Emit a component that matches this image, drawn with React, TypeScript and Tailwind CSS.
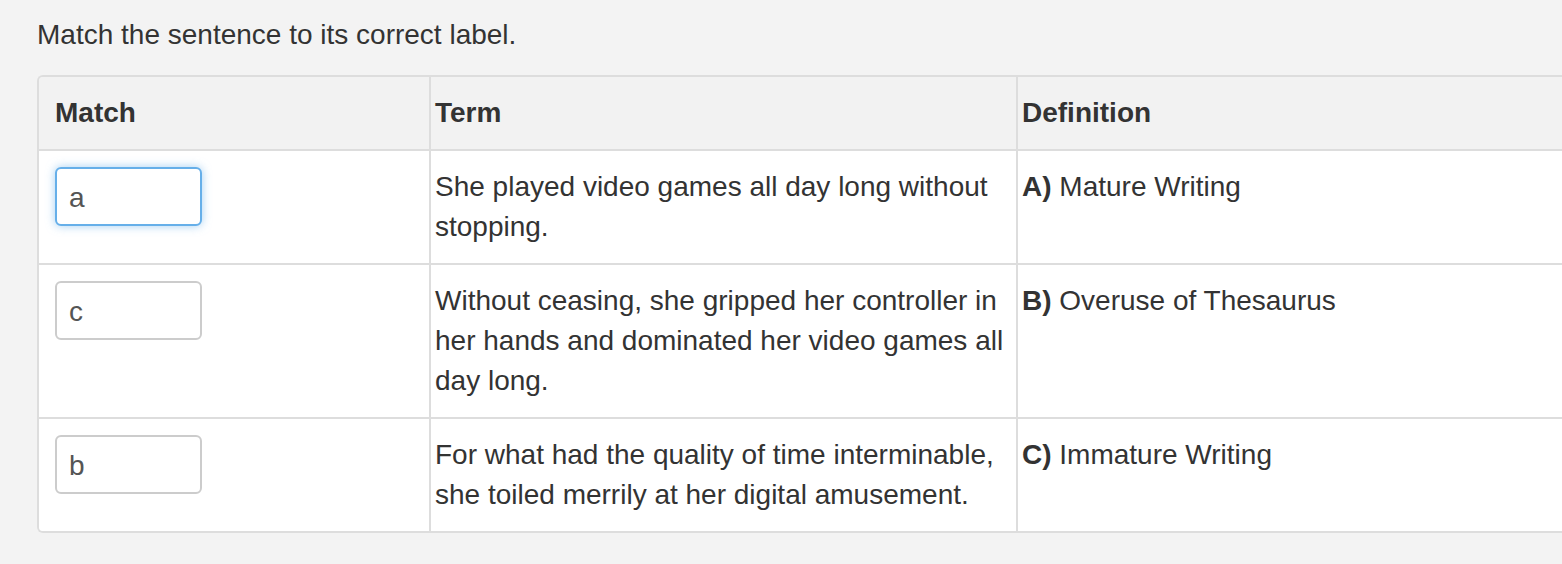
const rows = [
  {
    value: "a",
    focused: true,
    term: "She played video games all day long without stopping.",
    label: "A)",
    definition: "Mature Writing",
  },
  {
    value: "c",
    focused: false,
    term: "Without ceasing, she gripped her controller in her hands and dominated her video games all day long.",
    label: "B)",
    definition: "Overuse of Thesaurus",
  },
  {
    value: "b",
    focused: false,
    term: "For what had the quality of time interminable, she toiled merrily at her digital amusement.",
    label: "C)",
    definition: "Immature Writing",
  },
];

export default function App() {
  return (
    <div className="h-[564px] w-full overflow-hidden bg-[#f3f3f3] font-['Liberation_Sans',Arial,sans-serif] text-[#333]">
      <div className="pl-[37px] pt-[15px]">
        <p className="text-[28px] leading-[40px]">Match the sentence to its correct label.</p>
        <div className="mt-[20px] w-[1640px] overflow-hidden rounded-tl-[6px] rounded-bl-[6px] border-2 border-r-0 border-[#dddddd]">
          <div className="grid grid-cols-[390px_587px_1fr] bg-[#f2f2f2] text-[28px] font-bold leading-[40px]">
            <div className="py-[16px] pl-[16px]">Match</div>
            <div className="border-l-2 border-[#dddddd] py-[16px] pl-[4px]">Term</div>
            <div className="border-l-2 border-[#dddddd] py-[16px] pl-[4px]">Definition</div>
          </div>
          {rows.map((row) => (
            <div
              key={row.label}
              className="grid grid-cols-[390px_587px_1fr] border-t-2 border-[#dddddd] bg-white text-[28px] leading-[40px]"
            >
              <div className="pb-[15px] pl-[16px] pt-[16px]">
                <input
                  readOnly
                  value={row.value}
                  className={
                    row.focused
                      ? "h-[59px] w-[147px] rounded-[6px] border-2 border-[#66afe9] bg-white px-[12px] pt-[3px] text-[28px] text-[#555] shadow-[0_0_10px_rgba(102,175,233,0.6)] outline-none"
                      : "h-[59px] w-[147px] rounded-[6px] border-2 border-[#cccccc] bg-white px-[12px] pt-[3px] text-[28px] text-[#555] outline-none"
                  }
                />
              </div>
              <div className="border-l-2 border-[#dddddd] pb-[16px] pl-[4px] pr-[6px] pt-[16px]">
                {row.term}
              </div>
              <div className="border-l-2 border-[#dddddd] pb-[16px] pl-[4px] pt-[16px]">
                <span className="font-bold">{row.label}</span> {row.definition}
              </div>
            </div>
          ))}
        </div>
      </div>
    </div>
  );
}
